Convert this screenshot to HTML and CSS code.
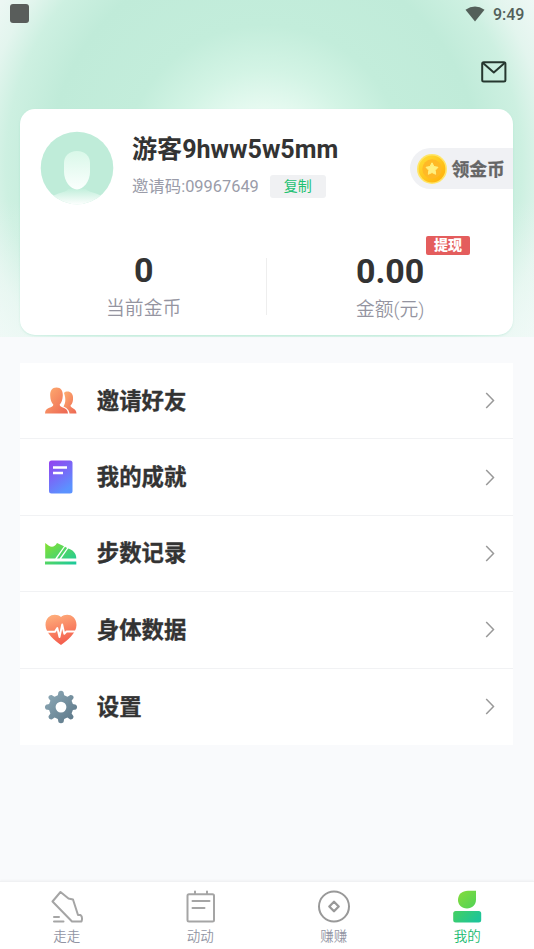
FILE: index.html
```html
<!DOCTYPE html>
<html lang="zh-CN">
<head>
<meta charset="utf-8">
<title>我的</title>
<link rel="stylesheet" href="styles.css">
</head>
<body>
<svg class="defs" width="0" height="0" aria-hidden="true">
  <defs>
    <linearGradient id="orange" x1="0" y1="0" x2="1" y2="1"><stop offset="0" stop-color="#ffb071"/><stop offset="1" stop-color="#ec6552"/></linearGradient>
    <linearGradient id="orangeDown" x1="0" y1="0" x2="0.3" y2="1"><stop offset="0" stop-color="#ffb37e"/><stop offset="1" stop-color="#f4604f"/></linearGradient>
    <linearGradient id="purple" x1="0" y1="0" x2="0.5" y2="1"><stop offset="0" stop-color="#9540ef"/><stop offset="1" stop-color="#5b92ff"/></linearGradient>
    <linearGradient id="green" x1="0" y1="0" x2="1" y2="1"><stop offset="0" stop-color="#86e22f"/><stop offset="1" stop-color="#18c8a0"/></linearGradient>
    <linearGradient id="leaf" x1="0" y1="0" x2="1" y2="1"><stop offset="0" stop-color="#86dc3c"/><stop offset="1" stop-color="#4fd257"/></linearGradient>
    <linearGradient id="base" x1="0" y1="0" x2="1" y2="0.4"><stop offset="0" stop-color="#45d060"/><stop offset="1" stop-color="#1fc598"/></linearGradient>
    <linearGradient id="steel" x1="0" y1="0" x2="1" y2="1"><stop offset="0" stop-color="#91adba"/><stop offset="1" stop-color="#587384"/></linearGradient>
    <linearGradient id="face" x1="0" y1="0" x2="0" y2="1"><stop offset="0" stop-color="#d9f8e9"/><stop offset="1" stop-color="#fbfffd"/></linearGradient>
    <linearGradient id="body" x1="0" y1="0" x2="0" y2="1"><stop offset="0" stop-color="#c3efdc"/><stop offset="1" stop-color="#fff"/></linearGradient>
    <linearGradient id="gold" x1="0" y1="0" x2="1" y2="1"><stop offset="0" stop-color="#ffe037"/><stop offset="1" stop-color="#ffad08"/></linearGradient>
  </defs>
</svg>
<header class="hero">
  <div class="status">
    <span class="status-app"></span>
    <svg class="wifi" width="20" height="16" viewBox="0 0 20 16"><path d="M0.5 3.8Q10-2.8 19.5 3.8L10 15.5Z" fill="#535f59"/></svg>
    <span class="clock">9:49</span>
  </div>
  <div class="toolbar">
    <svg width="26" height="22" viewBox="0 0 26 22" fill="none" stroke="#26372f" stroke-width="2" stroke-linejoin="round"><rect x="1.2" y="1.2" width="23.2" height="19.2" rx="1.5"/><path d="M2 2L12.8 11.5L23.6 2"/></svg>
  </div>
  <section class="profile">
    <div class="identity">
      <svg class="avatar" width="74" height="74" viewBox="0 0 74 74">
        <clipPath id="disc"><circle cx="37" cy="37" r="36.3"/></clipPath>
        <g clip-path="url(#disc)"><rect width="74" height="74" fill="#bfecd9"/><path d="M7 68C18 61 28 61 28 58H46C47 61 56 61 68 68V74H7Z" fill="url(#body)"/><path d="M37 20C45 20 50 25 50 32V41C50 50 43.500 58.500 37 58.500S24 50 24 41V32C24 25 29 20 37 20Z" fill="url(#face)"/></g>
      </svg>
      <div class="who">
        <h1>游客9hww5w5mm</h1>
        <div class="code"><span>邀请码:09967649</span><button>复制</button></div>
      </div>
      <div class="claim">
        <svg width="32" height="32" viewBox="0 0 32 32"><circle cx="16" cy="16" r="15" fill="#ffe567"/><circle cx="16" cy="16" r="13.400" fill="url(#gold)"/><circle cx="16" cy="16" r="9.700" fill="#ffb926"/><path d="M16 9.800L18 13.500L22 14.300L19.200 17.300L19.700 21.300L16 19.500L12.300 21.300L12.800 17.300L10 14.300L14 13.500Z" fill="#fff080" stroke="#fff080" stroke-linejoin="round"/></svg>
        <span>领金币</span>
      </div>
    </div>
    <div class="stats">
      <div class="stat"><strong>0</strong><span>当前金币</span></div>
      <div class="stat money"><strong>0.00<b class="badge">提现</b></strong><span>金额(元)</span></div>
    </div>
  </section>
</header>
<main class="menu">
  <a class="row">
    <svg class="icon" width="34" height="34" viewBox="0 0 34 34"><g fill="url(#orange)"><path d="M20 9C22 6.500 28.500 7 29 13C29.300 17 28.500 19.500 26.500 21.500C26 24 32.500 24 32.500 29.500H25.500C25 25.500 22 23.500 19.500 22.500C21 20 22.500 16 20 9Z"/><path d="M12.500 3.500C17 3.500 19 7 18.800 11.500C18.600 16 17.500 18.500 15.700 20.500C15.500 24.500 23.500 22 24 29.500H1C1.300 22 9.500 24.500 9.300 20.500C7.500 18.500 6.300 16 6.200 11.500C6 7 8 3.500 12.500 3.500Z"/></g></svg>
    <span>邀请好友</span><svg class="chevron" width="10" height="17" viewBox="0 0 10 17"><path d="M1.200 1L8.500 8.500L1.200 16"/></svg>
  </a>
  <a class="row">
    <svg class="icon" width="34" height="34" viewBox="0 0 34 34"><rect x="5" y="0.500" width="23.500" height="33" rx="2.500" fill="url(#purple)"/><path d="M9 7.500H23M9 13H19" stroke="#fff" stroke-width="2.300"/></svg>
    <span>我的成就</span><svg class="chevron" width="10" height="17" viewBox="0 0 10 17"><path d="M1.200 1L8.500 8.500L1.200 16"/></svg>
  </a>
  <a class="row">
    <svg class="icon" width="34" height="34" viewBox="0 0 34 34"><path d="M1.200 7L4.500 9.500Q9.500 13 13 7L20 10.200L11.200 22.500H1.200ZM21 10.700L23.100 11.900L15.500 22.500H13ZM24.200 12.500C28 14 32.300 16 32.300 22.500H17.300ZM1 25.500H32.300V28.500H1Z" fill="url(#green)"/></svg>
    <span>步数记录</span><svg class="chevron" width="10" height="17" viewBox="0 0 10 17"><path d="M1.200 1L8.500 8.500L1.200 16"/></svg>
  </a>
  <a class="row">
    <svg class="icon" width="34" height="34" viewBox="0 0 34 34"><path d="M17 4C22-0.500 32.500 1.500 32.500 12C32.500 20 23 28 17 32C11 28 1.500 20 1.500 12C1.500 1.500 12 -0.500 17 4Z" fill="url(#orangeDown)"/><path d="M1 18.800H11L13.300 15L15.500 24L18.200 11.500L20.300 20.800L22.500 18.500H33" fill="none" stroke="#fff" stroke-width="1.900" stroke-linejoin="round"/></svg>
    <span>身体数据</span><svg class="chevron" width="10" height="17" viewBox="0 0 10 17"><path d="M1.200 1L8.500 8.500L1.200 16"/></svg>
  </a>
  <a class="row">
    <svg class="icon" width="34" height="34" viewBox="0 0 34 34"><g fill="url(#steel)"><path fill-rule="evenodd" d="M14.500 2Q17-0.500 19.500 2L20.200 5.300L23.500 6.700L26.400 4.900Q29.700 4.800 29.600 7.900L27.600 10.800L28.900 14.100L32 14.700Q34.200 17 32 19.500L28.900 20.100L27.600 23.400L29.500 26.300Q29.500 29.500 26.300 29.500L23.400 27.500L20.200 28.900L19.500 32.200Q17 34.500 14.500 32.200L13.800 28.900L10.600 27.500L7.700 29.500Q4.500 29.500 4.500 26.300L6.400 23.400L5.100 20.100L2 19.500Q-0.200 17 2 14.700L5.100 14.100L6.400 10.800L4.400 7.900Q4.300 4.800 7.600 4.900L10.500 6.700L13.800 5.300ZM17 11.700A5.400 5.400 0 1 0 17 22.500A5.400 5.400 0 1 0 17 11.700Z"/></g></svg>
    <span>设置</span><svg class="chevron" width="10" height="17" viewBox="0 0 10 17"><path d="M1.200 1L8.500 8.500L1.200 16"/></svg>
  </a>
</main>
<nav class="tabs">
  <a><svg width="34" height="34" viewBox="0 0 34 34" fill="none" stroke="#a5a5a5" stroke-width="2" stroke-linejoin="round" stroke-linecap="round"><path d="M10.500 2L2.500 11.500L22 31.500H31.500Q33 27 30.500 25H28L23 9.500L18.500 8.500ZM4 27H9M4 31.500H13.500"/></svg><span>走走</span></a>
  <a><svg width="34" height="34" viewBox="0 0 34 34" fill="none" stroke="#a5a5a5" stroke-width="2" stroke-linecap="round"><rect x="4.500" y="4.200" width="26.500" height="27.300" rx="1.500"/><path d="M12 1.500V4M24 1.500V4M9.500 11H26.500M9.500 18H21.500"/></svg><span>动动</span></a>
  <a><svg width="34" height="34" viewBox="0 0 34 34" fill="none" stroke="#999" stroke-width="2" stroke-linejoin="round"><circle cx="17" cy="16.500" r="15"/><path d="M17 11.800L21.700 16.500L17 21.200L12.300 16.500Z" stroke-width="2.300"/></svg><span>赚赚</span></a>
  <a class="active"><svg width="34" height="34" viewBox="0 0 34 34"><path d="M18 0.800H26V9.500C26 15 22 18.500 17 18.500C11.500 18.500 8 14.500 8 10C8 4.500 12 0.800 18 0.800Z" fill="url(#leaf)"/><rect x="3.200" y="21" width="28" height="11.500" rx="2.500" fill="url(#base)"/></svg><span>我的</span></a>
</nav>
</body>
</html>
```

FILE: styles.css
```css
* { box-sizing: border-box; }
body {
  margin: 0;
  height: 949px;
  display: flex;
  flex-direction: column;
  background: #f9fafc;
  color: #333;
  font-family: Roboto, "Noto Sans CJK SC", sans-serif;
  overflow: hidden;
}
svg { display: block; flex: none; }
.defs { position: absolute; }
.hero {
  height: 337px;
  padding: 0 20.6px 0 20.4px;
  background:
    linear-gradient(to bottom, transparent 200px, rgba(240, 250, 247, .6) 337px),
    radial-gradient(circle at 264px 165px, #f0fdf6 0, #e7faf1 55px, #d3f4e5 95px, #c3eddb 140px, #c0ebd9 215px, #cdf0e1 258px, #e3f5ee 285px, #f0f8f6 320px);
}
.status {
  height: 28px;
  display: flex;
  align-items: center;
  margin: 0 -11px 0 -10px;
}
.status-app {
  width: 19px;
  height: 19px;
  border-radius: 3px;
  background: #595d5b;
  margin: 0 auto 1px 0;
}
.wifi { margin-right: 8px; }
.clock { font-size: 16px; font-weight: 500; color: #53605a; }
.toolbar {
  height: 81px;
  padding: 33px 6.400px 0 0;
  display: flex;
  justify-content: flex-end;
}
.profile {
  height: 226px;
  border-radius: 15px;
  background: #fff;
  box-shadow: 0 1px 2px rgba(120, 210, 180, .25);
}
.identity { height: 127px; padding: 21.500px 0 0 20px; display: flex; }
.who { margin-left: 17.600px; padding-top: 1.500px; }
h1 { margin: 0; font-size: 25.100px; line-height: 36px; font-weight: 700; white-space: nowrap; }
.code { display: flex; align-items: center; gap: 11px; margin-top: 7px; color: #9a9ca9; font-size: 16.400px; line-height: 23px; }
button {
  width: 56px;
  height: 23px;
  padding: 0;
  border: 0;
  border-radius: 3px;
  background: #f0f1f3;
  color: #22c172;
  font: 14px/23px Roboto, "Noto Sans CJK SC", sans-serif;
}
.claim {
  width: 103px;
  height: 41px;
  margin: 17.500px 0 0 auto;
  padding-left: 6px;
  display: flex;
  align-items: center;
  gap: 3px;
  border-radius: 21px 0 0 21px;
  background: #f0f1f4;
  color: #666;
  font-size: 17.800px;
  font-weight: 700;
}
.claim span { margin-top: -1px; -webkit-text-stroke: .3px #666; }
.stats { display: grid; grid-template-columns: 1fr 1fr; height: 99px; }
.stat { display: flex; flex-direction: column; align-items: center; position: relative; padding-top: 14px; }
.stat strong { position: relative; font-size: 34px; line-height: 40px; font-weight: 700; }
.stat span { margin-top: 5px; font-size: 18.800px; line-height: 28px; color: #9494a0; font-weight: 350; }
.stat:first-child::after { content: ""; position: absolute; right: 0; top: 22px; width: 1px; height: 57px; background: #eee; }
.money { padding-top: 15px; }
.badge {
  position: absolute;
  left: 70px;
  top: -15px;
  width: 44px;
  height: 19px;
  border-radius: 2px;
  background: #e45d5d;
  color: #fff;
  font-size: 14px;
  line-height: 19px;
  text-align: center;
}
.menu { margin: 26px 20.6px 0 20.4px; background: #fff; }
.row {
  height: 76.4px;
  display: flex;
  align-items: center;
  padding: 0 18.500px 0 23.400px;
  border-bottom: 1px solid #f1f2f4;
  font-size: 22.400px;
  font-weight: 700;
}
.row:last-child { border: 0; }
.row span { margin: 0 auto 0 19px; line-height: 34px; -webkit-text-stroke: .35px #333; }
.chevron { fill: none; stroke: #999; stroke-width: 1.5; }
.tabs {
  margin-top: auto;
  height: 68px;
  display: grid;
  grid-template-columns: repeat(4, 1fr);
  background: #fff;
  border-top: 1px solid #f0f1f3;
  box-shadow: 0 -1px 2px rgba(0, 0, 0, .03);
}
.tabs a { display: flex; flex-direction: column; align-items: center; padding-top: 8px; font-size: 13.500px; line-height: 20px; color: #9194a3; font-weight: 350; }
.tabs span { margin-top: 2px; }
.tabs .active { color: #18ba70; }
```
